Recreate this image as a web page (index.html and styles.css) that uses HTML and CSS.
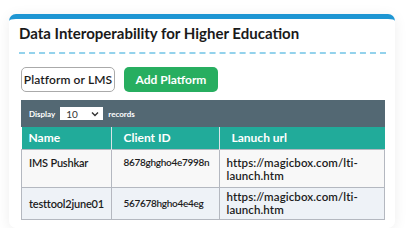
FILE: index.html
```html
<!DOCTYPE html>
<html lang="en">
<head>
    <meta charset="UTF-8">
    <meta name="viewport" content="width=device-width, initial-scale=1.0">
    <title>Data Interoperability</title>
    <link rel="stylesheet" href="styles.css">
</head>
<body>
    <div class="card">
        <div class="card-head">
            <h1>Data Interoperability for Higher Education</h1>
        </div>
        <div class="card-body">
            <div class="toolbar">
                <div class="platform-input">Platform or LMS</div>
                <button class="add-btn">Add Platform</button>
            </div>
            <div class="display-bar">
                <span>Display</span>
                <div class="select">
                    <span>10</span>
                    <svg width="8" height="6" viewBox="0 0 8 6"><path d="M1 1.5 L4 4.5 L7 1.5" fill="none" stroke="#333" stroke-width="1.4"/></svg>
                </div>
                <span>records</span>
            </div>
            <table class="grid">
                <thead>
                    <tr>
                        <th class="col-name">Name</th>
                        <th class="col-id">Client ID</th>
                        <th class="col-url">Lanuch url</th>
                    </tr>
                </thead>
                <tbody>
                    <tr class="first">
                        <td>IMS Pushkar</td>
                        <td class="cell-id">8678ghgho4e7998n</td>
                        <td class="cell-url">https://magicbox.com/lti-launch.htm</td>
                    </tr>
                    <tr class="alt">
                        <td>testtool2june01</td>
                        <td class="cell-id">567678hgho4e4eg</td>
                        <td class="cell-url">https://magicbox.com/lti-launch.htm</td>
                    </tr>
                </tbody>
            </table>
        </div>
    </div>
</body>
</html>
```

FILE: styles.css
```css
body {
    margin: 0;
    padding: 14px 0 0 9px;
    background-color: #fff;
    font-family: Lato, 'Open Sans', sans-serif;
    color: #1c1c1c;
}
.card {
    width: 386px;
    height: 214px;
    box-sizing: border-box;
    background-color: #fff;
    border-top: 5px solid #1e96d3;
    border-radius: 7px;
    box-shadow: 0 2px 14px rgba(0, 0, 0, 0.07);
}
.card-head {
    padding: 0 9px 0 10px;
}
.card-head h1 {
    margin: 0;
    padding: 5px 0 10px;
    font-size: 15px;
    font-weight: 700;
    color: #1a1a1a;
    border-bottom: 2px dashed #93d2ec;
}
.card-body {
    padding: 13px 10px 0 12px;
}
.toolbar {
    display: flex;
    align-items: center;
    gap: 9px;
    margin-bottom: 8px;
}
.platform-input {
    width: 94px;
    height: 25px;
    box-sizing: border-box;
    border: 1px solid #aaa;
    border-radius: 5px;
    font-size: 12px;
    font-weight: 600;
    line-height: 23px;
    text-align: center;
    letter-spacing: 0.1px;
}
.add-btn {
    width: 94px;
    height: 25px;
    border: none;
    border-radius: 5px;
    background-color: #27ae60;
    color: #fff;
    font-family: inherit;
    font-size: 12px;
    font-weight: 700;
    cursor: pointer;
}
.display-bar {
    display: flex;
    align-items: center;
    gap: 5px;
    height: 27px;
    padding: 0 8px;
    background-color: #536873;
    color: #fff;
    font-size: 8px;
    font-weight: 700;
}
.select {
    display: flex;
    align-items: center;
    justify-content: space-between;
    width: 43px;
    height: 13px;
    box-sizing: border-box;
    padding: 0 4px 0 6px;
    background-color: #fff;
    color: #333;
    font-size: 10px;
    font-weight: 400;
}
.grid {
    width: 100%;
    table-layout: fixed;
    border-collapse: collapse;
    font-size: 11px;
}
.grid thead tr {
    height: 22px;
}
.grid th {
    padding: 0 7px;
    background-color: #21ab9a;
    color: #fff;
    font-size: 12px;
    font-weight: 700;
    text-align: left;
    border-left: 1px solid #d8e4e8;
}
.grid th:first-child {
    border-left: none;
}
.grid td {
    padding: 0 7px;
    border: 1px solid #b4b8c0;
    background-color: #f8f8f8;
    font-weight: 600;
    line-height: 13px;
    letter-spacing: -0.2px;
}
.grid td.cell-id {
    padding-left: 12px;
    padding-right: 4px;
    font-size: 10px;
    letter-spacing: -0.3px;
}
.grid td.cell-url {
    font-size: 11.5px;
    letter-spacing: 0.1px;
}
.grid tr.first {
    height: 38px;
}
.grid tr.first td {
    padding-top: 6px;
    vertical-align: top;
}
.grid tr.alt {
    height: 32px;
}
.grid tr.alt td {
    background-color: #eef2f7;
    vertical-align: middle;
}
.col-name {
    width: 75px;
}
.col-id {
    width: 88px;
}
.grid th:nth-child(2),
.grid th:nth-child(3) {
    padding-left: 12px;
}
```
